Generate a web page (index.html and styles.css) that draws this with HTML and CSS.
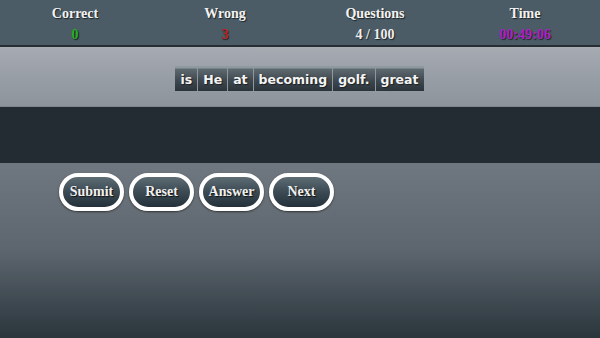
FILE: index.html
```html
<!DOCTYPE html>
<html lang="en">
<head>
    <meta charset="UTF-8">
    <meta name="viewport" content="width=device-width, initial-scale=1.0">
    <title>Sentence Builder</title>
    <link rel="stylesheet" href="styles.css">
</head>
<body>
    <!-- score bar -->
    <div class="scorebar">
        <div class="stat">
            <p class="label">Correct</p>
            <p class="value correct">0</p>
        </div>
        <div class="stat">
            <p class="label">Wrong</p>
            <p class="value wrong">3</p>
        </div>
        <div class="stat">
            <p class="label">Questions</p>
            <p class="value">4 / 100</p>
        </div>
        <div class="stat">
            <p class="label">Time</p>
            <p class="value time">00:49:06</p>
        </div>
    </div>

    <!-- shuffled words -->
    <div class="words">
        <div class="wordrow">
            <span class="word">is</span>
            <span class="word">He</span>
            <span class="word">at</span>
            <span class="word">becoming</span>
            <span class="word">golf.</span>
            <span class="word">great</span>
        </div>
    </div>

    <!-- answer drop area -->
    <div class="answer"></div>

    <div class="controls">
        <button class="btn">Submit</button>
        <button class="btn">Reset</button>
        <button class="btn">Answer</button>
        <button class="btn">Next</button>
    </div>
</body>
</html>
```

FILE: styles.css
```css
body{
    margin: 0;
    width: 600px;
    height: 338px;
    display: flex;
    flex-direction: column;
    background: linear-gradient(#6f7880 163px, #5d666e 250px, #2a353c 338px);
    overflow: hidden;
}
p{
    margin: 0;
}
.scorebar{
    height: 45px;
    background-color: #4b5c66;
    border-bottom: 2px solid #262e34;
    display: flex;
}
.stat{
    flex: 1;
    display: flex;
    flex-direction: column;
    align-items: center;
    padding-top: 5px;
}
.label{
    font-family: "Liberation Serif", serif;
    font-weight: bold;
    font-size: 14px;
    line-height: 17px;
    color: #f2f2f2;
    text-shadow: 1px 1px 1px #1c2226;
}
.value{
    font-family: "Liberation Serif", serif;
    font-weight: bold;
    font-size: 14px;
    line-height: 16px;
    margin-top: 5px;
    color: #eeeeee;
    text-shadow: 1px 1px 1px #1c2226;
}
.correct{
    color: #22b022;
}
.wrong{
    color: #c02222;
}
.time{
    color: #b020c8;
}
.words{
    height: 59px;
    background: linear-gradient(#a6abb2, #989ea6 50%, #8d949c);
    border-top: 1px solid #a9aeb4;
    display: flex;
    justify-content: center;
    padding-top: 18px;
    box-sizing: border-box;
}
.wordrow{
    display: flex;
    height: 25px;
    margin-left: -1px;
}
.word{
    font-family: "DejaVu Sans", sans-serif;
    font-weight: bold;
    font-size: 12.5px;
    line-height: 25px;
    padding: 1px 5px 0;
    box-sizing: border-box;
    height: 25px;
    color: #f4f4f4;
    background: linear-gradient(#8e9aa0 0, #8e9aa0 2px, #5f6970 3px, #3e474e 60%, #2c343b);
    border-left: 1px solid #8f979e;
    text-shadow: 1px 1px 1px #1a1f23;
}
.word:first-child{
    border-left: none;
}
.answer{
    height: 56px;
    background-color: #232b33;
    border-top: 1px solid #7f868d;
}
.controls{
    display: flex;
    gap: 5px;
    padding: 10px 0 0 59px;
}
.btn{
    width: 65px;
    height: 38px;
    border: 4px solid #ffffff;
    border-radius: 19px;
    background: linear-gradient(#5e6c74, #3b4a53 50%, #24313a);
    font-family: "Liberation Serif", serif;
    font-weight: bold;
    font-size: 14px;
    color: #f0f0f0;
    text-shadow: 1px 1px 1px #111;
    padding: 0;
    box-shadow: 0 1px 2px #333;
}
```
